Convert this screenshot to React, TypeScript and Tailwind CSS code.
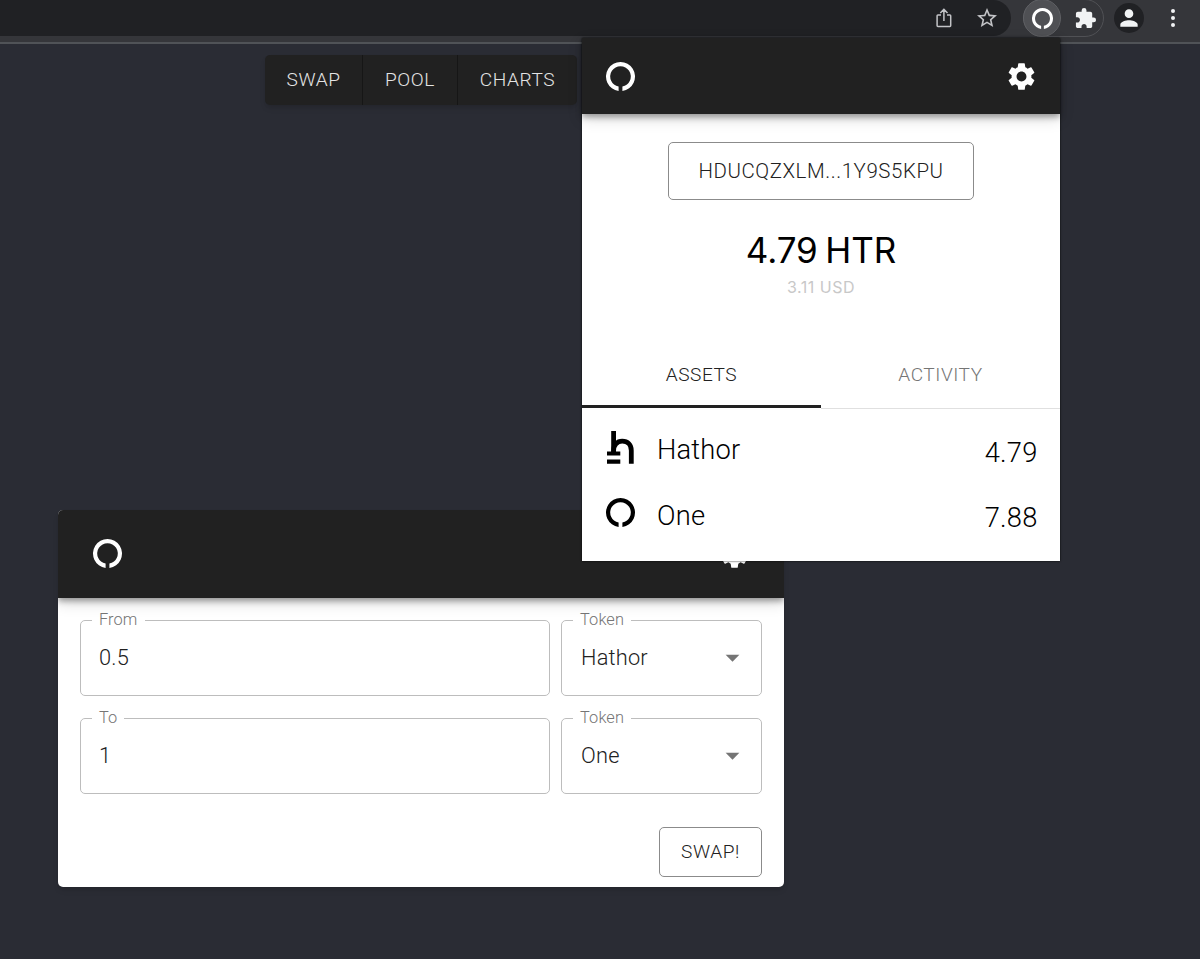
import type { ReactNode } from 'react';
import { MdArrowDropDown, MdExtension, MdPerson, MdSettings, MdStarOutline } from 'react-icons/md';

const navItems = [
  { label: 'SWAP', className: 'w-[98px]' },
  { label: 'POOL', className: 'w-[95px]' },
  { label: 'CHARTS', className: 'w-[119px]' },
];

function RingLogo({ className }: { className?: string }) {
  return (
    <svg viewBox="0 0 29 29" fill="currentColor" className={className}>
      <path d="M12.6 28.9A14.5 14.5 0 1 1 16.4 28.9V24.6A10.3 10.3 0 1 0 12.6 24.6Z" />
    </svg>
  );
}

function HathorLogo() {
  return (
    <svg viewBox="0 0 27 33" fill="none" className="mb-0.5 ml-px h-[33px] w-[27px]">
      <path d="M6.6 0V22.5" stroke="currentColor" strokeWidth="4.8" />
      <path d="M0 22.5H13.3M0 30.7H13.3" stroke="currentColor" strokeWidth="4.2" />
      <path
        d="M6.6 22V19.5C6.6 14 10 10.2 15.2 10.2C20.8 10.2 24.3 13.7 24.3 19.5V32.8"
        stroke="currentColor"
        strokeWidth="4.8"
      />
    </svg>
  );
}

function ShareIcon() {
  return (
    <svg viewBox="0 0 16 20" fill="none" className="h-5 w-4 text-[#c3c4c7]">
      <path
        d="M5 7H1.9Q1.1 7 1.1 7.8V17.6Q1.1 18.4 1.9 18.4H13.9Q14.7 18.4 14.7 17.6V7.8Q14.7 7 13.9 7H11M7.9 13V1.6M4.3 5L7.9 1.4L11.5 5"
        stroke="currentColor"
        strokeWidth="1.5"
      />
    </svg>
  );
}

function BrowserBar() {
  return (
    <header className="flex h-11 shrink-0 border-b-2 border-[#505357] bg-[#35363a]">
      <div className="flex h-9 w-[1011px] items-center justify-end rounded-r-[18px] bg-[#202124] pr-3">
        <ShareIcon />
        <MdStarOutline className="ml-[23px] size-6 text-[#c3c4c7]" />
      </div>
      <div className="-mt-px ml-3 flex h-[38px] w-[81px] items-center rounded-full border border-[#505155]">
        <div className="-ml-px flex size-[38px] items-center justify-center rounded-full border border-[#5f6064] bg-[#4f5054]">
          <RingLogo className="size-[21px] text-white" />
        </div>
        <MdExtension className="ml-[13px] size-[23px] text-[#f1f3f4]" />
      </div>
      <div className="mt-[3px] ml-[10px] flex size-[30px] items-center justify-center rounded-full bg-[#202124]">
        <MdPerson className="size-[26px] text-[#f1f3f4]" />
      </div>
      <div className="mt-[9px] ml-[27px] flex flex-col gap-[3px]">
        <span className="size-1 rounded-full bg-[#f1f3f4]" />
        <span className="size-1 rounded-full bg-[#f1f3f4]" />
        <span className="size-1 rounded-full bg-[#f1f3f4]" />
      </div>
    </header>
  );
}

function Field({ label, className, children }: { label: string; className: string; children: ReactNode }) {
  return (
    <fieldset className={`h-[86px] rounded-[5px] border border-[#bdbdbd] pl-[11px] ${className}`}>
      <legend className="h-5 px-[7px] text-[16.4px] leading-5 tracking-[0.1px] text-[#757575]">{label}</legend>
      <div className="flex h-[57px] items-center justify-between pr-3 pl-[7px] text-[21.8px] tracking-[0.2px] text-[#212121]">
        {children}
      </div>
    </fieldset>
  );
}

function SwapCard() {
  return (
    <section className="mt-[405px] ml-[58px] h-[377px] w-[726px] overflow-hidden rounded-[5px] bg-white shadow-md">
      <div className="relative flex h-[88px] items-center justify-between bg-[#212121] pr-[33px] pl-[34.5px] text-white shadow-[0_3px_6px_rgba(0,0,0,0.35),0_5px_14px_rgba(0,0,0,0.15)]">
        <RingLogo className="mb-px size-[29px]" />
        <MdSettings className="size-[33px]" />
      </div>
      <div className="flex flex-col px-[22px] pt-3">
        <div className="flex gap-[11px]">
          <Field label="From" className="w-[470px]">0.5</Field>
          <Field label="Token" className="w-[201px]">
            <span className="pl-px">Hathor</span>
            <MdArrowDropDown className="mb-0.5 size-[33px] text-[#757575]" />
          </Field>
        </div>
        <div className="mt-3 flex gap-[11px]">
          <Field label="To" className="w-[470px]">1</Field>
          <Field label="Token" className="w-[201px]">
            <span className="pl-px">One</span>
            <MdArrowDropDown className="mb-0.5 size-[33px] text-[#757575]" />
          </Field>
        </div>
        <button className="mt-[33px] h-[50px] w-[103px] self-end rounded-[5px] border border-[#8b8b8b] text-[19.1px] tracking-[0.55px] text-[#212121]">
          SWAP!
        </button>
      </div>
    </section>
  );
}

function AssetRow({ icon, name, amount }: { icon: ReactNode; name: string; amount: string }) {
  return (
    <li className="flex h-[65.5px] items-center pr-[22.5px] pl-6 text-[27.3px] tracking-[0.2px] text-black">
      <span className="flex w-[51px]">{icon}</span>
      <span className="pt-1">{name}</span>
      <span className="ml-auto pt-[9px]">{amount}</span>
    </li>
  );
}

function WalletPopup() {
  return (
    <aside className="absolute top-[38px] left-[582px] h-[523px] w-[478px] bg-white shadow-[0_0_2px_rgba(0,0,0,0.9)]">
      <div className="flex h-[76px] items-center justify-between bg-[#212121] pr-[22px] pl-6 text-white shadow-[0_3px_6px_rgba(0,0,0,0.35),0_5px_14px_rgba(0,0,0,0.15)]">
        <RingLogo className="size-[29px]" />
        <MdSettings className="size-[33px]" />
      </div>
      <div className="flex flex-col items-center">
        <button className="mt-7 h-[58px] w-[306px] rounded-[5px] border border-[#8b8b8b] text-[20.45px] tracking-[0.58px] text-[#212121]">
          HDUCQZXLM...1Y9S5KPU
        </button>
        <p className="mt-[30px] font-[Inter] text-[35px] leading-10 font-normal tracking-[-0.1px] text-black [word-spacing:-2px]">
          4.79 HTR
        </p>
        <p className="mt-[7px] font-[Inter] text-[16px] leading-5 font-normal tracking-[0.5px] text-[#c8c8c8]">3.11 USD</p>
      </div>
      <div className="mt-[46px] flex h-[66px] text-[19.1px] tracking-[0.55px]">
        <div className="flex w-1/2 justify-center">
          <span className="mt-5 leading-6 text-[#212121]">ASSETS</span>
        </div>
        <div className="flex w-1/2 justify-center">
          <span className="mt-5 leading-6 text-[#757575]">ACTIVITY</span>
        </div>
      </div>
      {/* tab underline: active half sits on top of the divider */}
      <div className="-mt-[4px] flex h-[4px]">
        <div className="h-[3px] w-1/2 bg-[#212121]" />
        <div className="w-1/2 border-b border-[#e0e0e0]" />
      </div>
      <ul className="mt-[7px]">
        <AssetRow icon={<HathorLogo />} name="Hathor" amount="4.79" />
        <AssetRow icon={<RingLogo className="mb-[3px] size-[29px]" />} name="One" amount="7.88" />
      </ul>
    </aside>
  );
}

export default function App() {
  return (
    <div className="relative flex h-[959px] w-[1200px] flex-col overflow-hidden bg-[#2a2c34] font-['Roboto',sans-serif] font-light">
      <BrowserBar />
      <nav className="mt-[11px] ml-[265px] flex h-[50px] w-[312px] shrink-0 rounded-[5px] bg-[#212121] shadow-md">
        {navItems.map((item, i) => (
          <a
            key={item.label}
            className={`flex items-center justify-center text-[19.1px] tracking-[0.55px] text-[#e4e4e4] ${item.className} ${i < navItems.length - 1 ? 'border-r border-[#161616]' : ''}`}
          >
            {item.label}
          </a>
        ))}
      </nav>
      <SwapCard />
      <WalletPopup />
    </div>
  );
}
